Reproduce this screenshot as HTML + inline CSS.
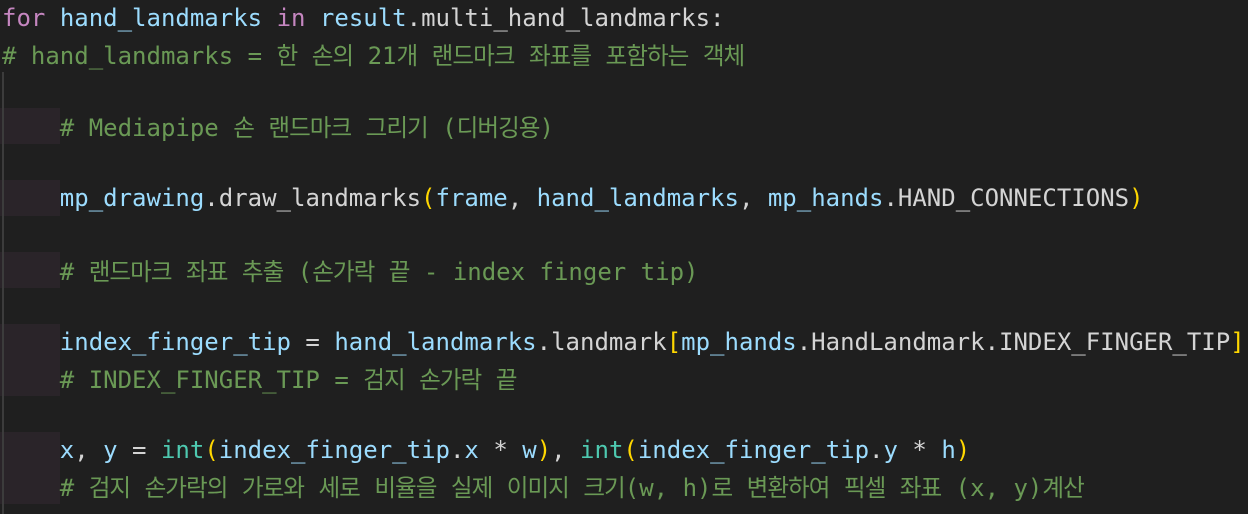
<!DOCTYPE html>
<html><head><meta charset="utf-8"><style>
html,body{margin:0;padding:0;}
body{width:1248px;height:514px;background:#1f1f1f;overflow:hidden;position:relative;font-family:"DejaVu Sans Mono","Liberation Mono","Noto Sans CJK KR",monospace;font-size:24px;color:#d4d4d4;}
.l{position:absolute;left:2px;height:36px;line-height:36px;white-space:pre;letter-spacing:0px;}
.b{position:absolute;left:0;width:60px;background:#2a2429;}
.g{position:absolute;left:2px;top:72px;width:2px;height:442px;background:#3c3c3c;}
k{font-family:"Noto Sans CJK KR",sans-serif;letter-spacing:-1px;font-size:23.6px;}
.kw{color:#c586c0}.v{color:#9cdcfe}.c{color:#6a9955}.t{color:#4ec9b0}.p{color:#ffd700}
</style></head><body>
<div class="b" style="top:108px;height:36px"></div>
<div class="b" style="top:180px;height:36px"></div>
<div class="b" style="top:252px;height:36px"></div>
<div class="b" style="top:324px;height:72px"></div>
<div class="b" style="top:432px;height:72px"></div>
<div class="g"></div>
<div class="l" style="top:0"><span class="kw">for</span> <span class="v">hand_landmarks</span> <span class="kw">in</span> <span class="v">result</span>.multi_hand_landmarks:</div>
<div class="l c" style="top:36px"># hand_landmarks = <k>한</k> <k>손의</k> 21<k>개</k> <k>랜드마크</k> <k>좌표를</k> <k>포함하는</k> <k>객체</k></div>
<div class="l c" style="top:108px">    # Mediapipe <k>손</k> <k>랜드마크</k> <k>그리기</k> (<k>디버깅용</k>)</div>
<div class="l" style="top:180px">    <span class="v">mp_drawing</span>.draw_landmarks<span class="p">(</span><span class="v">frame</span>, <span class="v">hand_landmarks</span>, <span class="v">mp_hands</span>.HAND_CONNECTIONS<span class="p">)</span></div>
<div class="l c" style="top:252px">    # <k>랜드마크</k> <k>좌표</k> <k>추출</k> (<k>손가락</k> <k>끝</k> - index finger tip)</div>
<div class="l" style="top:324px">    <span class="v">index_finger_tip</span> = <span class="v">hand_landmarks</span>.landmark<span class="p">[</span><span class="v">mp_hands</span>.HandLandmark.INDEX_FINGER_TIP<span class="p">]</span></div>
<div class="l c" style="top:360px">    # INDEX_FINGER_TIP = <k>검지</k> <k>손가락</k> <k>끝</k></div>
<div class="l" style="top:432px">    <span class="v">x</span>, <span class="v">y</span> = <span class="t">int</span><span class="p">(</span><span class="v">index_finger_tip</span>.<span class="v">x</span> * <span class="v">w</span><span class="p">)</span>, <span class="t">int</span><span class="p">(</span><span class="v">index_finger_tip</span>.<span class="v">y</span> * <span class="v">h</span><span class="p">)</span></div>
<div class="l c" style="top:468px">    # <k>검지</k> <k>손가락의</k> <k>가로와</k> <k>세로</k> <k>비율을</k> <k>실제</k> <k>이미지</k> <k>크기</k>(w, h)<k>로</k> <k>변환하여</k> <k>픽셀</k> <k>좌표</k> (x, y)<k>계산</k></div>
</body></html>
